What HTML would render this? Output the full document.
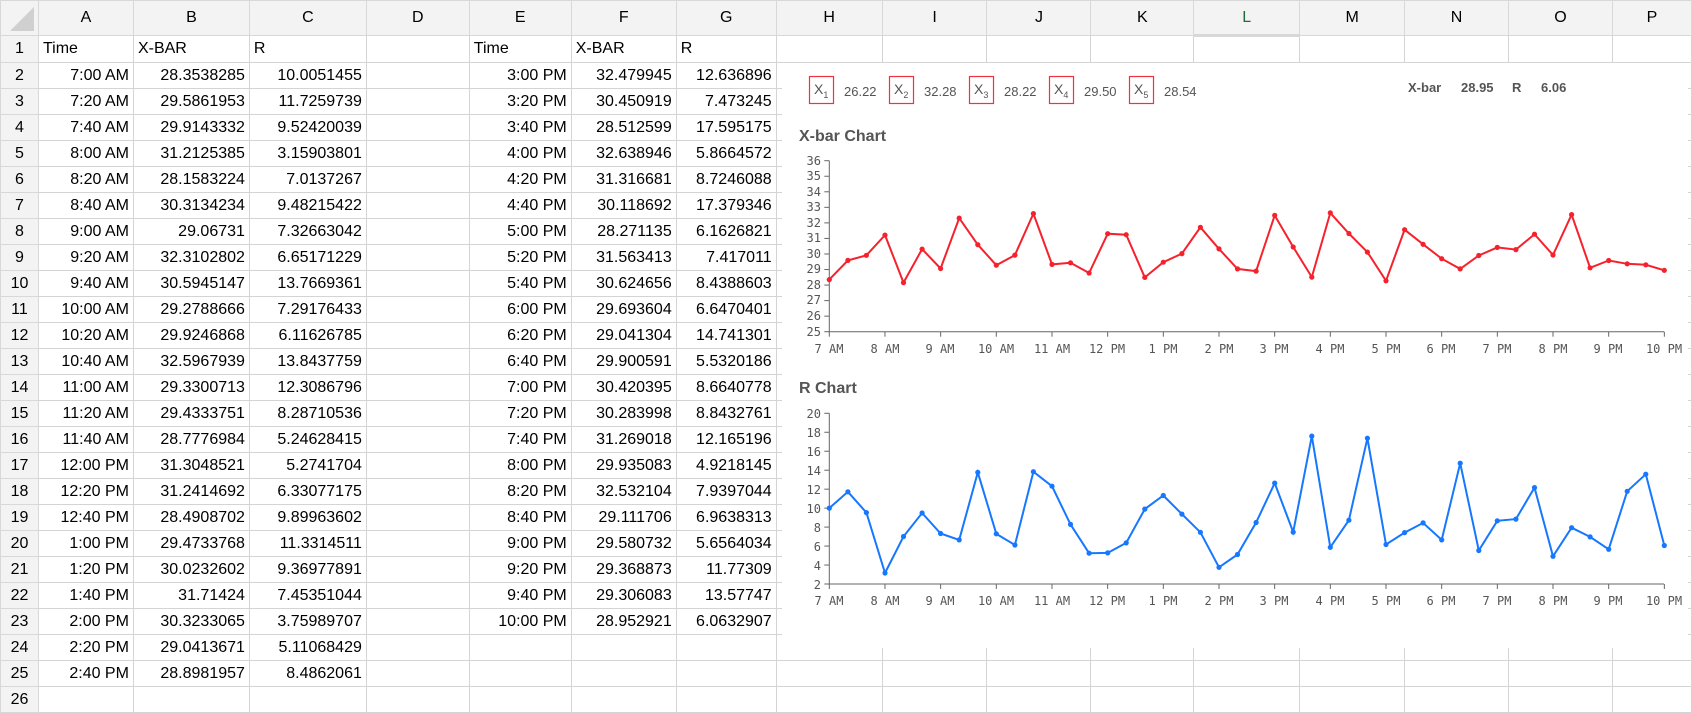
<!DOCTYPE html>
<html><head><meta charset="utf-8">
<style>
body{margin:0;width:1692px;height:706px;overflow:hidden;background:#fff;font-family:"Liberation Sans",Arial,sans-serif;position:relative}
table{border-collapse:collapse;table-layout:fixed;position:absolute;left:0;top:0}
td{border:1px solid #d4d4d4;height:25px;padding:0 4px;font-size:16px;color:#000;white-space:nowrap;overflow:hidden}
tr.h td{height:33px;background:#f3f3f3;text-align:center;font-size:16px;border-color:#d8d8d8}
td.rh{background:#f3f3f3;text-align:center;padding:0;border-color:#d8d8d8}
td.r{text-align:right}
td.sel{color:#1e6e3e;border-bottom:3px solid #1e6e3e;background:#e6e6e6}
#chart{position:absolute;left:782px;top:66px;width:906px;height:582px;background:#fff}
svg text{font-family:"DejaVu Sans Mono",monospace;font-size:12px;fill:#555}
</style></head><body>
<table>
<colgroup><col style="width:38px"><col style="width:95px"><col style="width:116px"><col style="width:117px"><col style="width:103px"><col style="width:102px"><col style="width:105px"><col style="width:100px"><col style="width:106px"><col style="width:105px"><col style="width:104px"><col style="width:103px"><col style="width:106px"><col style="width:105px"><col style="width:104px"><col style="width:104px"><col style="width:79px"></colgroup>
<tr class="h"><td style="position:relative"><div style="position:absolute;right:4px;bottom:4px;width:0;height:0;border-left:24px solid transparent;border-bottom:24px solid #d0d0d0"></div></td><td>A</td><td>B</td><td>C</td><td>D</td><td>E</td><td>F</td><td>G</td><td>H</td><td>I</td><td>J</td><td>K</td><td class="sel">L</td><td>M</td><td>N</td><td>O</td><td>P</td></tr>
<tr><td class="rh">1</td><td>Time</td><td>X-BAR</td><td>R</td><td></td><td>Time</td><td>X-BAR</td><td>R</td><td></td><td></td><td></td><td></td><td></td><td></td><td></td><td></td><td></td></tr>
<tr><td class="rh">2</td><td class="r">7:00 AM</td><td class="r">28.3538285</td><td class="r">10.0051455</td><td></td><td class="r">3:00 PM</td><td class="r">32.479945</td><td class="r">12.636896</td><td colspan="9"></td></tr>
<tr><td class="rh">3</td><td class="r">7:20 AM</td><td class="r">29.5861953</td><td class="r">11.7259739</td><td></td><td class="r">3:20 PM</td><td class="r">30.450919</td><td class="r">7.473245</td><td colspan="9"></td></tr>
<tr><td class="rh">4</td><td class="r">7:40 AM</td><td class="r">29.9143332</td><td class="r">9.52420039</td><td></td><td class="r">3:40 PM</td><td class="r">28.512599</td><td class="r">17.595175</td><td colspan="9"></td></tr>
<tr><td class="rh">5</td><td class="r">8:00 AM</td><td class="r">31.2125385</td><td class="r">3.15903801</td><td></td><td class="r">4:00 PM</td><td class="r">32.638946</td><td class="r">5.8664572</td><td colspan="9"></td></tr>
<tr><td class="rh">6</td><td class="r">8:20 AM</td><td class="r">28.1583224</td><td class="r">7.0137267</td><td></td><td class="r">4:20 PM</td><td class="r">31.316681</td><td class="r">8.7246088</td><td colspan="9"></td></tr>
<tr><td class="rh">7</td><td class="r">8:40 AM</td><td class="r">30.3134234</td><td class="r">9.48215422</td><td></td><td class="r">4:40 PM</td><td class="r">30.118692</td><td class="r">17.379346</td><td colspan="9"></td></tr>
<tr><td class="rh">8</td><td class="r">9:00 AM</td><td class="r">29.06731</td><td class="r">7.32663042</td><td></td><td class="r">5:00 PM</td><td class="r">28.271135</td><td class="r">6.1626821</td><td colspan="9"></td></tr>
<tr><td class="rh">9</td><td class="r">9:20 AM</td><td class="r">32.3102802</td><td class="r">6.65171229</td><td></td><td class="r">5:20 PM</td><td class="r">31.563413</td><td class="r">7.417011</td><td colspan="9"></td></tr>
<tr><td class="rh">10</td><td class="r">9:40 AM</td><td class="r">30.5945147</td><td class="r">13.7669361</td><td></td><td class="r">5:40 PM</td><td class="r">30.624656</td><td class="r">8.4388603</td><td colspan="9"></td></tr>
<tr><td class="rh">11</td><td class="r">10:00 AM</td><td class="r">29.2788666</td><td class="r">7.29176433</td><td></td><td class="r">6:00 PM</td><td class="r">29.693604</td><td class="r">6.6470401</td><td colspan="9"></td></tr>
<tr><td class="rh">12</td><td class="r">10:20 AM</td><td class="r">29.9246868</td><td class="r">6.11626785</td><td></td><td class="r">6:20 PM</td><td class="r">29.041304</td><td class="r">14.741301</td><td colspan="9"></td></tr>
<tr><td class="rh">13</td><td class="r">10:40 AM</td><td class="r">32.5967939</td><td class="r">13.8437759</td><td></td><td class="r">6:40 PM</td><td class="r">29.900591</td><td class="r">5.5320186</td><td colspan="9"></td></tr>
<tr><td class="rh">14</td><td class="r">11:00 AM</td><td class="r">29.3300713</td><td class="r">12.3086796</td><td></td><td class="r">7:00 PM</td><td class="r">30.420395</td><td class="r">8.6640778</td><td colspan="9"></td></tr>
<tr><td class="rh">15</td><td class="r">11:20 AM</td><td class="r">29.4333751</td><td class="r">8.28710536</td><td></td><td class="r">7:20 PM</td><td class="r">30.283998</td><td class="r">8.8432761</td><td colspan="9"></td></tr>
<tr><td class="rh">16</td><td class="r">11:40 AM</td><td class="r">28.7776984</td><td class="r">5.24628415</td><td></td><td class="r">7:40 PM</td><td class="r">31.269018</td><td class="r">12.165196</td><td colspan="9"></td></tr>
<tr><td class="rh">17</td><td class="r">12:00 PM</td><td class="r">31.3048521</td><td class="r">5.2741704</td><td></td><td class="r">8:00 PM</td><td class="r">29.935083</td><td class="r">4.9218145</td><td colspan="9"></td></tr>
<tr><td class="rh">18</td><td class="r">12:20 PM</td><td class="r">31.2414692</td><td class="r">6.33077175</td><td></td><td class="r">8:20 PM</td><td class="r">32.532104</td><td class="r">7.9397044</td><td colspan="9"></td></tr>
<tr><td class="rh">19</td><td class="r">12:40 PM</td><td class="r">28.4908702</td><td class="r">9.89963602</td><td></td><td class="r">8:40 PM</td><td class="r">29.111706</td><td class="r">6.9638313</td><td colspan="9"></td></tr>
<tr><td class="rh">20</td><td class="r">1:00 PM</td><td class="r">29.4733768</td><td class="r">11.3314511</td><td></td><td class="r">9:00 PM</td><td class="r">29.580732</td><td class="r">5.6564034</td><td colspan="9"></td></tr>
<tr><td class="rh">21</td><td class="r">1:20 PM</td><td class="r">30.0232602</td><td class="r">9.36977891</td><td></td><td class="r">9:20 PM</td><td class="r">29.368873</td><td class="r">11.77309</td><td colspan="9"></td></tr>
<tr><td class="rh">22</td><td class="r">1:40 PM</td><td class="r">31.71424</td><td class="r">7.45351044</td><td></td><td class="r">9:40 PM</td><td class="r">29.306083</td><td class="r">13.57747</td><td colspan="9"></td></tr>
<tr><td class="rh">23</td><td class="r">2:00 PM</td><td class="r">30.3233065</td><td class="r">3.75989707</td><td></td><td class="r">10:00 PM</td><td class="r">28.952921</td><td class="r">6.0632907</td><td colspan="9"></td></tr>
<tr><td class="rh">24</td><td class="r">2:20 PM</td><td class="r">29.0413671</td><td class="r">5.11068429</td><td></td><td></td><td></td><td></td><td></td><td></td><td></td><td></td><td></td><td></td><td></td><td></td><td></td></tr>
<tr><td class="rh">25</td><td class="r">2:40 PM</td><td class="r">28.8981957</td><td class="r">8.4862061</td><td></td><td></td><td></td><td></td><td></td><td></td><td></td><td></td><td></td><td></td><td></td><td></td><td></td></tr>
<tr><td class="rh">26</td><td></td><td></td><td></td><td></td><td></td><td></td><td></td><td></td><td></td><td></td><td></td><td></td><td></td><td></td><td></td><td></td></tr>
</table>
<div id="chart"></div>
<svg id="s" width="1692" height="706" style="position:absolute;left:0;top:0">
<g fill="none" stroke="#f0323c" stroke-width="1.2">
<rect x="809.5" y="76.5" width="24" height="27"/><rect x="889.5" y="76.5" width="24" height="27"/><rect x="969.5" y="76.5" width="24" height="27"/><rect x="1049.5" y="76.5" width="24" height="27"/><rect x="1129.5" y="76.5" width="24" height="27"/>
</g>
<g>
<text x="814" y="94" style="font-family:'Liberation Sans',sans-serif;font-size:14px">X<tspan font-size="9" dy="4">1</tspan></text>
<text x="894" y="94" style="font-family:'Liberation Sans',sans-serif;font-size:14px">X<tspan font-size="9" dy="4">2</tspan></text>
<text x="974" y="94" style="font-family:'Liberation Sans',sans-serif;font-size:14px">X<tspan font-size="9" dy="4">3</tspan></text>
<text x="1054" y="94" style="font-family:'Liberation Sans',sans-serif;font-size:14px">X<tspan font-size="9" dy="4">4</tspan></text>
<text x="1134" y="94" style="font-family:'Liberation Sans',sans-serif;font-size:14px">X<tspan font-size="9" dy="4">5</tspan></text>
<text x="844" y="96" style="font-family:'Liberation Sans',sans-serif;font-size:13px">26.22</text>
<text x="924" y="96" style="font-family:'Liberation Sans',sans-serif;font-size:13px">32.28</text>
<text x="1004" y="96" style="font-family:'Liberation Sans',sans-serif;font-size:13px">28.22</text>
<text x="1084" y="96" style="font-family:'Liberation Sans',sans-serif;font-size:13px">29.50</text>
<text x="1164" y="96" style="font-family:'Liberation Sans',sans-serif;font-size:13px">28.54</text>
<text x="1408" y="92" style="font-family:'Liberation Sans',sans-serif;font-size:13px;font-weight:bold">X-bar</text>
<text x="1461" y="92" style="font-family:'Liberation Sans',sans-serif;font-size:13px;font-weight:bold">28.95</text>
<text x="1512" y="92" style="font-family:'Liberation Sans',sans-serif;font-size:13px;font-weight:bold">R</text>
<text x="1541" y="92" style="font-family:'Liberation Sans',sans-serif;font-size:13px;font-weight:bold">6.06</text>
<text x="799" y="141" style="font-family:'Liberation Sans',sans-serif;font-size:16px;font-weight:bold;fill:#555">X-bar Chart</text>
<text x="799" y="393" style="font-family:'Liberation Sans',sans-serif;font-size:16px;font-weight:bold;fill:#555">R Chart</text>
</g>
<g id="ax"></g>
<g text-anchor="end">
<text x="821" y="165">36</text><text x="821" y="180">35</text><text x="821" y="196">34</text><text x="821" y="211">33</text><text x="821" y="227">32</text><text x="821" y="242">31</text><text x="821" y="258">30</text><text x="821" y="273">29</text><text x="821" y="289">28</text><text x="821" y="304">27</text><text x="821" y="320">26</text><text x="821" y="336">25</text>
<text x="821" y="418">20</text><text x="821" y="437">18</text><text x="821" y="456">16</text><text x="821" y="475">14</text><text x="821" y="494">12</text><text x="821" y="513">10</text><text x="821" y="532">8</text><text x="821" y="551">6</text><text x="821" y="570">4</text><text x="821" y="589">2</text>
</g>
<g text-anchor="middle">
<text x="829" y="353">7 AM</text><text x="885" y="353">8 AM</text><text x="940" y="353">9 AM</text><text x="996" y="353">10 AM</text><text x="1052" y="353">11 AM</text><text x="1107" y="353">12 PM</text><text x="1163" y="353">1 PM</text><text x="1219" y="353">2 PM</text><text x="1274" y="353">3 PM</text><text x="1330" y="353">4 PM</text><text x="1386" y="353">5 PM</text><text x="1441" y="353">6 PM</text><text x="1497" y="353">7 PM</text><text x="1553" y="353">8 PM</text><text x="1608" y="353">9 PM</text><text x="1664" y="353">10 PM</text>
<text x="829" y="605">7 AM</text><text x="885" y="605">8 AM</text><text x="940" y="605">9 AM</text><text x="996" y="605">10 AM</text><text x="1052" y="605">11 AM</text><text x="1107" y="605">12 PM</text><text x="1163" y="605">1 PM</text><text x="1219" y="605">2 PM</text><text x="1274" y="605">3 PM</text><text x="1330" y="605">4 PM</text><text x="1386" y="605">5 PM</text><text x="1441" y="605">6 PM</text><text x="1497" y="605">7 PM</text><text x="1553" y="605">8 PM</text><text x="1608" y="605">9 PM</text><text x="1664" y="605">10 PM</text>
</g>
</svg>
<script>
var X=[28.3538285,29.5861953,29.9143332,31.2125385,28.1583224,30.3134234,29.06731,32.3102802,30.5945147,29.2788666,29.9246868,32.5967939,29.3300713,29.4333751,28.7776984,31.3048521,31.2414692,28.4908702,29.4733768,30.0232602,31.71424,30.3233065,29.0413671,28.8981957,32.479945,30.450919,28.512599,32.638946,31.316681,30.118692,28.271135,31.563413,30.624656,29.693604,29.041304,29.900591,30.420395,30.283998,31.269018,29.935083,32.532104,29.111706,29.580732,29.368873,29.306083,28.952921];
var R=[10.0051455,11.7259739,9.52420039,3.15903801,7.0137267,9.48215422,7.32663042,6.65171229,13.7669361,7.29176433,6.11626785,13.8437759,12.3086796,8.28710536,5.24628415,5.2741704,6.33077175,9.89963602,11.3314511,9.36977891,7.45351044,3.75989707,5.11068429,8.4862061,12.636896,7.473245,17.595175,5.8664572,8.7246088,17.379346,6.1626821,7.417011,8.4388603,6.6470401,14.741301,5.5320186,8.6640778,8.8432761,12.165196,4.9218145,7.9397044,6.9638313,5.6564034,11.77309,13.57747,6.0632907];
var g=document.getElementById('ax'),s='';
var x0=829.3,dx=55.67/3;
function chart(d,ytop,ybot,vmin,vmax,step,col){
 s+='<path d="M'+x0+' '+ytop+'V'+ybot+'H1664" stroke="#666" stroke-width="1" fill="none"/>';
 for(var v=vmin;v<=vmax;v+=step){var y=ybot-(v-vmin)/(vmax-vmin)*(ybot-ytop);s+='<path d="M'+(x0-5)+' '+y+'H'+x0+'" stroke="#666"/>';}
 for(var h=0;h<=15;h++){var x=x0+h*55.67;s+='<path d="M'+x+' '+ybot+'v5" stroke="#666"/>';}
 var p='',c='';
 d.forEach(function(v,i){var x=x0+i*dx,y=ybot-(v-vmin)/(vmax-vmin)*(ybot-ytop);p+=(i?'L':'M')+x.toFixed(1)+' '+y.toFixed(1);c+='<circle cx="'+x.toFixed(1)+'" cy="'+y.toFixed(1)+'" r="2.6" fill="'+col+'"/>';});
 s+='<path d="'+p+'" stroke="'+col+'" stroke-width="2" fill="none"/>'+c;
}
chart(X,160.7,331.7,25,36,1,'#f5222d');
chart(R,413.3,584,2,20,2,'#1677ff');
g.innerHTML=s;
</script>
</body></html>
